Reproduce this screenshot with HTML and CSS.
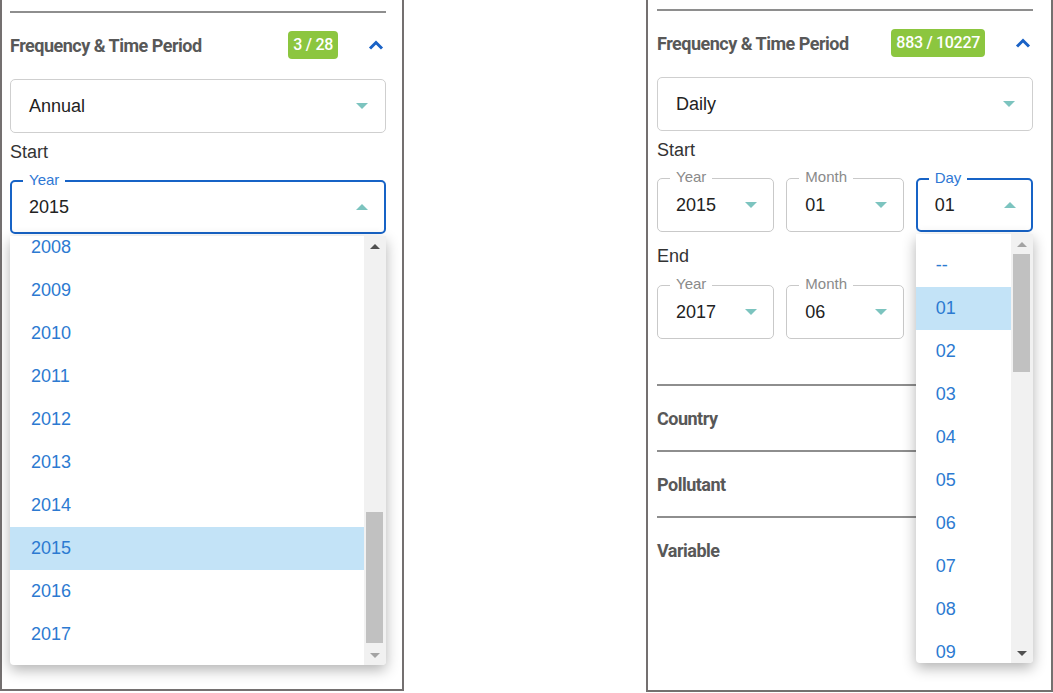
FILE: index.html
```html
<!DOCTYPE html>
<html lang="en">
<head>
<meta charset="utf-8">
<title>Frequency &amp; Time Period</title>
<link rel="stylesheet" href="styles.css">
</head>
<body>
<div class="page">
  <aside class="panel panel-a">
    <section class="section">
      <div class="section-head">
        <h2 class="section-title">Frequency &amp; Time Period</h2>
        <span class="badge">3 / 28</span>
        <svg class="chevron" viewBox="0 0 16 10" width="16" height="10"><path d="M2 8.5 L8 2.5 L14 8.5" fill="none" stroke="#1a62c6" stroke-width="3"/></svg>
      </div>
      <div class="select"><span class="value">Annual</span><span class="caret"></span></div>
      <div class="period-label">Start</div>
      <div class="field field--focus">
        <span class="field-label">Year</span>
        <span class="value">2015</span><span class="caret caret--up"></span>
        <div class="dropdown">
          <div class="options options--scrolled">
            <div class="option">2008</div>
            <div class="option">2009</div>
            <div class="option">2010</div>
            <div class="option">2011</div>
            <div class="option">2012</div>
            <div class="option">2013</div>
            <div class="option">2014</div>
            <div class="option option--selected">2015</div>
            <div class="option">2016</div>
            <div class="option">2017</div>
          </div>
          <div class="scrollbar">
            <div class="sb-btn"><span class="sb-up"></span></div>
            <div class="sb-thumb sb-thumb--a"></div>
            <div class="sb-btn sb-btn--end"><span class="sb-down sb-off"></span></div>
          </div>
        </div>
      </div>
    </section>
  </aside>

  <aside class="panel panel-b">
    <section class="section section--open">
      <div class="section-head">
        <h2 class="section-title">Frequency &amp; Time Period</h2>
        <span class="badge">883 / 10227</span>
        <svg class="chevron" viewBox="0 0 16 10" width="16" height="10"><path d="M2 8.5 L8 2.5 L14 8.5" fill="none" stroke="#1a62c6" stroke-width="3"/></svg>
      </div>
      <div class="select"><span class="value">Daily</span><span class="caret"></span></div>
      <div class="period-label">Start</div>
      <div class="field-row">
        <div class="field field--small">
          <span class="field-label">Year</span>
          <span class="value">2015</span><span class="caret"></span>
        </div>
        <div class="field field--small">
          <span class="field-label">Month</span>
          <span class="value">01</span><span class="caret"></span>
        </div>
        <div class="field field--small field--focus">
          <span class="field-label">Day</span>
          <span class="value">01</span><span class="caret caret--up"></span>
          <div class="dropdown">
            <div class="options options--top">
              <div class="option">--</div>
              <div class="option option--selected">01</div>
              <div class="option">02</div>
              <div class="option">03</div>
              <div class="option">04</div>
              <div class="option">05</div>
              <div class="option">06</div>
              <div class="option">07</div>
              <div class="option">08</div>
              <div class="option">09</div>
            </div>
            <div class="scrollbar">
              <div class="sb-btn"><span class="sb-up sb-off"></span></div>
              <div class="sb-thumb sb-thumb--b"></div>
              <div class="sb-btn sb-btn--end"><span class="sb-down"></span></div>
            </div>
          </div>
        </div>
      </div>
      <div class="period-label period-label--end">End</div>
      <div class="field-row">
        <div class="field field--small">
          <span class="field-label">Year</span>
          <span class="value">2017</span><span class="caret"></span>
        </div>
        <div class="field field--small">
          <span class="field-label">Month</span>
          <span class="value">06</span><span class="caret"></span>
        </div>
        <div class="field field--small"></div>
      </div>
    </section>
    <section class="section">
      <div class="section-head"><h2 class="section-title">Country</h2></div>
    </section>
    <section class="section">
      <div class="section-head"><h2 class="section-title">Pollutant</h2></div>
    </section>
    <section class="section">
      <div class="section-head"><h2 class="section-title">Variable</h2></div>
    </section>
  </aside>
</div>
</body>
</html>
```

FILE: styles.css
```css
* { box-sizing: border-box; }

html, body {
  margin: 0;
  padding: 0;
  background: #fff;
}

body {
  font-family: "Liberation Sans", Arial, sans-serif;
  font-size: 18px;
  color: #222;
}

.page {
  display: flex;
  align-items: flex-start;
  width: 1053px;
  height: 693px;
  overflow: hidden;
}

.panel {
  border: 2px solid #747070;
  border-top: 0;
  width: 404px;
  height: 691px;
  padding: 11px 16px 0 8px;
}

.panel-b {
  margin-left: 242px;
  width: 407px;
  height: 692px;
  padding: 9px 18px 0 9px;
}

.section {
  border-top: 2px solid #8e8e8e;
}

.section--open {
  padding-bottom: 45px;
}

.section-head {
  height: 64px;
  display: flex;
  align-items: center;
}

.section-title {
  flex: 1;
  min-width: 0;
  margin: 0;
  font-family: Roboto, "Liberation Sans", sans-serif;
  font-weight: bold;
  font-size: 18px;
  letter-spacing: -0.5px;
  color: #585858;
  white-space: nowrap;
}

.badge {
  background: #8cc63f;
  color: #fff;
  font-family: Roboto, "Liberation Sans", sans-serif;
  font-weight: 500;
  font-size: 16px;
  letter-spacing: -0.3px;
  white-space: nowrap;
  height: 28px;
  line-height: 28px;
  padding: 0 5px;
  border-radius: 4px;
}

.chevron {
  display: block;
  margin-left: 30px;
  margin-right: 2px;
}

.select {
  margin-top: 2px;
  height: 54px;
  border: 1px solid #cfcfcf;
  border-radius: 5px;
  display: flex;
  align-items: center;
  padding: 0 17px 0 18px;
}

.value {
  flex: 1;
  color: #222;
}

.caret {
  width: 0;
  height: 0;
  border-left: 6px solid transparent;
  border-right: 6px solid transparent;
  border-top: 6px solid #7cc4bf;
}

.caret--up {
  border-top: 0;
  border-bottom: 6px solid #7cc4bf;
}

.period-label {
  margin: 9px 0 18px;
  line-height: 20px;
  color: #333;
}

.period-label--end {
  margin: 14px 0 19px;
}

.field-row {
  display: grid;
  grid-template-columns: repeat(3, 1fr);
  gap: 12px;
}

.field {
  position: relative;
  height: 54px;
  border: 1px solid #c9c9c9;
  border-radius: 5px;
  display: flex;
  align-items: center;
  padding: 0 17px 0 18px;
}

.field--small {
  padding: 0 16px 0 18px;
}

.field--focus {
  border: 2px solid #1763c6;
  padding: 0 16px 0 17px;
}

.field--small.field--focus {
  padding: 0 15px 0 17px;
}

.field-label {
  position: absolute;
  top: -11px;
  left: 12px;
  padding: 0 6px;
  background: #fff;
  font-size: 15px;
  line-height: 18px;
  color: #8a8a8a;
}

.field--focus .field-label {
  left: 11px;
  color: #2f78d4;
}

.dropdown {
  position: absolute;
  left: -2px;
  right: -2px;
  top: calc(100% + 4px);
  height: 429px;
  background: #fff;
  box-shadow: 0 5px 14px rgba(0, 0, 0, 0.3);
  border-radius: 0 0 4px 4px;
  display: flex;
  overflow: hidden;
  z-index: 5;
}

.options {
  flex: 1;
}

.options--scrolled {
  margin-top: -10px;
}

.options--top {
  padding-top: 10px;
}

.option {
  height: 43px;
  line-height: 43px;
  padding-left: 21px;
  color: #2c7ad1;
}

.options--top .option {
  padding-left: 20px;
}

.option--selected {
  background: #c3e3f7;
}

.scrollbar {
  width: 22px;
  background: #f1f1f1;
  display: flex;
  flex-direction: column;
}

.sb-btn {
  height: 20px;
  display: flex;
  align-items: center;
  justify-content: center;
}

.sb-btn--end {
  margin-top: auto;
}

.sb-up {
  width: 0;
  height: 0;
  border-left: 5px solid transparent;
  border-right: 5px solid transparent;
  border-bottom: 5px solid #505050;
}

.sb-down {
  width: 0;
  height: 0;
  border-left: 5px solid transparent;
  border-right: 5px solid transparent;
  border-top: 5px solid #505050;
}

.sb-up.sb-off { border-bottom-color: #a3a3a3; }
.sb-down.sb-off { border-top-color: #a3a3a3; }

.sb-thumb {
  margin: 0 3px 0 2px;
  background: #c1c1c1;
}

.sb-thumb--a {
  margin-top: 256px;
  height: 131px;
}

.sb-thumb--b {
  height: 118px;
}
```
